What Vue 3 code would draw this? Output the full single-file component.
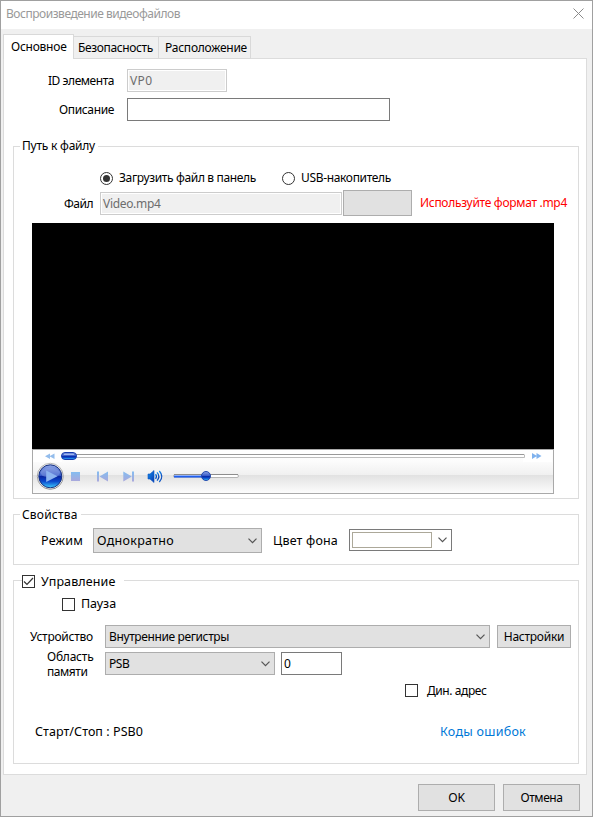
<script setup>
import { ref } from 'vue'

const tabs = [
  { title: 'Безопасность', size: 75, cls: 'tab-security' },
  { title: 'Расположение', size: 82, cls: 'tab-layout' },
]
const source = ref('panel')
const control = ref(true)
const pause = ref(false)
const dynamic = ref(false)

// Spreads or tightens the letters so that a caption takes the given width.
const vFit = {
  mounted(el, { value }) {
    const natural = el.getBoundingClientRect().width
    const count = el.textContent.length
    el.style.letterSpacing = `${(value - natural) / count}px`
  },
}
</script>

<template>
  <div class="dialog">
    <header class="titlebar">
      <span v-fit="174" class="t">Воспроизведение видеофайлов</span>
      <svg class="close" width="11" height="11" viewBox="0 0 11 11"><path d="M.5 .5l10 10M10.500 .5l-10 10" /></svg>
    </header>

    <nav class="tabs">
      <div class="tab active"><span v-fit="55.5" class="t">Основное</span></div>
      <div v-for="tab in tabs" :key="tab.title" class="tab" :class="tab.cls">
        <span v-fit="tab.size" class="t">{{ tab.title }}</span>
      </div>
    </nav>

    <main class="panel">
      <div class="row id-row">
        <label class="caption"><span v-fit="66" class="t">ID элемента</span></label>
        <div class="field disabled id-field"><span v-fit="22.500" class="t">VP0</span></div>
      </div>
      <div class="row desc-row">
        <label class="caption"><span v-fit="55" class="t">Описание</span></label>
        <div class="field desc-field"></div>
      </div>

      <section class="group path">
        <div class="legend"><span v-fit="73" class="t">Путь к файлу</span></div>
        <div class="row radios">
          <label class="option" @click="source = 'panel'">
            <i class="radio" :class="{ on: source === 'panel' }"></i>
            <span v-fit="137" class="t">Загрузить файл в панель</span>
          </label>
          <label class="option" @click="source = 'usb'">
            <i class="radio" :class="{ on: source === 'usb' }"></i>
            <span v-fit="90" class="t">USB-накопитель</span>
          </label>
        </div>
        <div class="row file-row">
          <label class="caption file-caption"><span v-fit="29" class="t">Файл</span></label>
          <div class="field disabled file-field"><span v-fit="57.500" class="t">Video.mp4</span></div>
          <button class="btn browse"></button>
          <span v-fit="147" class="t hint">Используйте формат .mp4</span>
        </div>
        <div class="player">
          <div class="screen"></div>
          <svg class="controls" width="522" height="45" viewBox="0 0 522 45">
            <defs>
              <linearGradient id="bar" x1="0" y1="0" x2="0" y2="1">
                <stop offset="0" stop-color="#fff" /><stop offset=".27" stop-color="#fcfcfc" />
                <stop offset=".58" stop-color="#f0f0f0" /><stop offset=".59" stop-color="#e2e2e2" />
                <stop offset="1" stop-color="#fdfdfd" />
              </linearGradient>
              <linearGradient id="orb" x1="0" y1="0" x2="0" y2="1">
                <stop offset="0" stop-color="#8fa6e6" /><stop offset=".46" stop-color="#3a5cc8" />
                <stop offset=".5" stop-color="#0a25a0" /><stop offset=".72" stop-color="#0a48cc" />
                <stop offset="1" stop-color="#3fd0ff" />
              </linearGradient>
              <linearGradient id="pale" x1="0" y1="0" x2="0" y2="1">
                <stop offset="0" stop-color="#84bdf0" /><stop offset="1" stop-color="#a9a8dc" />
              </linearGradient>
              <linearGradient id="vol" x1="0" y1="0" x2="1" y2="1">
                <stop offset="0" stop-color="#1590ee" /><stop offset="1" stop-color="#0838b0" />
              </linearGradient>
              <linearGradient id="ring" x1="0" y1="0" x2="0" y2="1">
                <stop offset="0" stop-color="#b8b8b8" /><stop offset="1" stop-color="#8d8d8d" />
              </linearGradient>
            </defs>
            <rect x=".5" y=".5" width="521" height="44" fill="url(#bar)" stroke="#a9a9a9" />
            <path d="M1 13V1.500H520V13H491V9H30V13Z" fill="#fff" />

            <path d="M18 4.500v5.500l-5-2.750zM22.500 4.500v5.500l-5-2.750z" fill="#94bdec" />
            <path d="M500 4v6l5-3zM504.500 4v6l5-3z" fill="#7fb2ee" />
            <path d="M31 8.500H492.500V5.500" fill="none" stroke="#bdbdbd" />
            <path d="M31 5.500H492" stroke="#999" />
            <rect x="29.500" y="3.500" width="15" height="7" rx="3.500" fill="url(#orb)" stroke="#173caf" />
            <path d="M32 5.500h10" stroke="#9fb7f0" />

            <circle cx="18.300" cy="27.300" r="13" fill="#f3f3f3" stroke="url(#ring)" />
            <circle cx="18.300" cy="27.300" r="11.500" fill="url(#orb)" stroke="#16307f" />
            <path d="M8.500 23Q18 14 28 23Q28 29 18 28Q9 29 8.500 23Z" fill="#9eb2ea" opacity=".35" />
            <path d="M14.200 21.500v11.500l11.300-5.700z" fill="#8db4f0" />

            <rect x="39" y="23" width="9" height="9" fill="url(#pale)" />
            <path d="M65 22.500h2v10h-2zM76 22.500v10l-8.500-5z" fill="url(#pale)" />
            <path d="M102 22.500h-2v10h2zM91.300 22.500v10l8.500-5z" fill="url(#pale)" />
            <path d="M116 25h2l4-3.500v12l-4-3.500h-2z" fill="url(#vol)" stroke="#0b56c4" stroke-width=".6" />
            <g fill="none" stroke="url(#vol)" stroke-width="1.300">
              <path d="M123.500 25.200q1.800 2.300 0 4.600" />
              <path d="M125 23.400q3.600 4.100 0 8.200" />
              <path d="M127.300 22q5 5.500 0 11" />
            </g>

            <rect x="141.500" y="25.500" width="65" height="3" rx="1.500" fill="#fff" stroke="#b5b5b5" />
            <path d="M142 25.500h64" stroke="#8d8d8d" />
            <path d="M142 27.500h32" stroke="#1f5ef0" stroke-width="2" />
            <circle cx="174" cy="27" r="4.500" fill="url(#orb)" stroke="#2449ad" />
          </svg>
        </div>
      </section>

      <section class="group props">
        <div class="legend"><span v-fit="55.500" class="t">Свойства</span></div>
        <div class="row props-row">
          <label class="caption mode-caption"><span v-fit="42" class="t wide">Режим</span></label>
          <div class="select mode">
            <span v-fit="77" class="t wide">Однократно</span>
            <svg class="chev" width="9" height="6" viewBox="0 0 9 6"><path d="M.5 .7l4 4 4-4" /></svg>
          </div>
          <label class="color-caption"><span v-fit="65" class="t wide">Цвет фона</span></label>
          <div class="color">
            <i class="swatch"></i>
            <svg class="chev" width="9" height="6" viewBox="0 0 9 6"><path d="M.5 .7l4 4 4-4" /></svg>
          </div>
        </div>
      </section>

      <section class="group control">
        <div class="legend check-legend" @click="control = !control">
          <i class="check"><svg v-if="control" width="11" height="11" viewBox="0 0 11 11"><path d="M1 5.500l3 3 6-6.500" /></svg></i>
          <span v-fit="74.500" class="t wide">Управление</span>
        </div>
        <label class="option pause" @click="pause = !pause">
          <i class="check"><svg v-if="pause" width="11" height="11" viewBox="0 0 11 11"><path d="M1 5.500l3 3 6-6.500" /></svg></i>
          <span v-fit="35" class="t wide">Пауза</span>
        </label>
        <div class="row device-row">
          <label class="caption dev-caption"><span v-fit="63" class="t">Устройство</span></label>
          <div class="select device">
            <span v-fit="120" class="t">Внутренние регистры</span>
            <svg class="chev" width="9" height="6" viewBox="0 0 9 6"><path d="M.5 .7l4 4 4-4" /></svg>
          </div>
          <button class="btn settings"><span v-fit="60.500" class="t">Настройки</span></button>
        </div>
        <div class="row memory-row">
          <label class="memory-caption">
            <span v-fit="46.500" class="t">Область</span>
            <span v-fit="40.500" class="t">памяти</span>
          </label>
          <div class="select memory">
            <span v-fit="20.500" class="t">PSB</span>
            <svg class="chev" width="9" height="6" viewBox="0 0 9 6"><path d="M.5 .7l4 4 4-4" /></svg>
          </div>
          <div class="field address"><span v-fit="7" class="t">0</span></div>
        </div>
        <label class="option dynamic" @click="dynamic = !dynamic">
          <i class="check"><svg v-if="dynamic" width="11" height="11" viewBox="0 0 11 11"><path d="M1 5.500l3 3 6-6.500" /></svg></i>
          <span v-fit="59.500" class="t">Дин. адрес</span>
        </label>
        <div class="row footer-row">
          <span v-fit="108" class="t wide">Старт/Стоп : PSB0</span>
          <a v-fit="86" class="t wide link">Коды ошибок</a>
        </div>
      </section>
    </main>

    <footer class="actions">
      <button class="btn action"><span v-fit="16.500" class="t">OK</span></button>
      <button class="btn action"><span v-fit="42" class="t">Отмена</span></button>
    </footer>
  </div>
</template>

<style>
body { margin: 0; background: #f0f0f0; }
</style>

<style scoped>
.dialog, .dialog * { box-sizing: border-box; }
.dialog {
  width: 593px; height: 817px; border: 1px solid #a0a0a0; background: #f0f0f0;
  font: 12px/16px "Noto Sans", "Open Sans", sans-serif; color: #000;
}
.t { display: inline-block; white-space: nowrap; flex: none; }
.wide { font-size: 12.500px; }
.titlebar {
  height: 28px; background: #fff; color: #999;
  display: flex; align-items: center; justify-content: space-between; padding: 0 8px 2px 5px;
}
.close { display: block; margin-bottom: 1px; }
.close path { stroke: #8a8a8a; fill: none; }

.tabs { display: flex; align-items: flex-end; height: 30px; margin: 0 0 -1px 2px; }
.tab {
  height: 23px; border: 1px solid #d9d9d9; border-left: 0; background: #f0f0f0;
  display: flex; align-items: center; padding-top: 1px;
}
.tab.active {
  width: 71px; height: 25px; border-left: 1px solid #d9d9d9; border-bottom: 0; background: #fff;
  padding: 0 0 1px 7px; position: relative; z-index: 1;
}
.tab-security { width: 85px; padding-left: 4px; }
.tab-layout { width: 92px; padding-left: 6px; }

.panel { width: 584px; height: 717px; margin-left: 2px; border: 1px solid #dcdcdc; background: #fff; padding: 10px 7px 0 9px; }
.row { display: flex; align-items: center; }
.caption { display: flex; justify-content: flex-end; flex: none; }
.id-row .caption, .desc-row .caption { width: 101px; margin-right: 13px; }
.desc-row { margin-top: 6px; }
.field { height: 23px; border: 1px solid #7a7a7a; background: #fff; display: flex; align-items: center; padding-left: 2px; flex: none; }
.field.disabled { border-color: #ccc; background: #f0f0f0; box-shadow: inset 0 0 0 1px #fff; color: #6d6d6d; }
.id-field { width: 100px; }
.desc-field { width: 263px; }

.group { width: 566px; border: 1px solid #dcdcdc; }
.legend { display: flex; width: fit-content; height: 16px; margin: -9px 0 0 6px; padding: 0 3px 0 2px; background: #fff; }
.path { height: 353px; margin-top: 25px; }
.radios { margin: 16px 0 0 86px; gap: 26px; height: 16px; }
.option { display: flex; align-items: center; gap: 6px; }
.radio { width: 13px; height: 13px; border: 1px solid #333; border-radius: 50%; display: grid; place-items: center; }
.radio.on::after { content: ""; width: 7px; height: 7px; border-radius: 50%; background: #333; }
.file-row { margin-top: 4px; height: 26px; }
.file-caption { width: 79px; margin-right: 7px; padding-top: 2px; }
.file-field { width: 242px; margin-top: 1px; }
.btn { border: 1px solid #adadad; background: #e1e1e1; font: inherit; color: inherit; padding: 0; display: flex; align-items: center; justify-content: center; flex: none; }
.browse { width: 69px; height: 26px; margin-left: 1px; }
.hint { color: #f00; margin: -1px 0 0 8px; }
.player { width: 522px; margin: 7px 0 0 18px; }
.screen { height: 226px; background: #000; }
.controls { display: block; }

.props { height: 51px; margin-top: 15px; }
.props .legend { height: 17px; padding-top: 1px; margin-bottom: -1px; }
.props-row { height: 25px; margin-top: 6px; }
.mode-caption { width: 69px; margin-right: 10px; }
.select { border: 1px solid #adadad; background: #e1e1e1; display: flex; align-items: center; justify-content: space-between; padding: 0 4px 0 3px; flex: none; }
.chev path { fill: none; stroke: #555; stroke-width: 1.200; }
.chev { display: block; }
.mode { width: 169px; height: 25px; }
.color-caption { width: 76px; padding-left: 11px; margin-right: 11px; }
.color { width: 103px; height: 22px; margin-top: -1px; border: 1px solid #7a7a7a; display: flex; align-items: center; justify-content: space-between; padding: 0 4px 0 2px; }
.swatch { width: 80px; height: 16px; border: 1px solid #aca899; }

.control { height: 184px; margin-top: 15px; }
.check-legend { margin: -7px 0 0 8px; padding: 0 8px 0 0; align-items: center; gap: 6px; }
.check { width: 13px; height: 13px; border: 1px solid #333; background: #fff; display: block; flex: none; }
.check svg { display: block; }
.check path { fill: none; stroke: #333; stroke-width: 1.200; }
.check-legend .check { margin-bottom: 1px; }
.pause { margin: 6px 0 0 48px; height: 16px; width: fit-content; }
.device-row { margin-top: 13px; height: 23px; }
.dev-caption { width: 79px; margin-right: 12px; }
.device { width: 385px; height: 23px; }
.settings { width: 74px; height: 23px; margin-left: 7px; }
.memory-row { margin-top: 4px; height: 23px; }
.memory-caption { display: flex; flex-direction: column; align-items: flex-start; width: 58px; margin: 0 0 0 33px; line-height: 15px; }
.memory { width: 170px; height: 23px; }
.address { width: 61px; margin-left: 6px; }
.dynamic { margin: 8px 0 0 391px; height: 16px; gap: 9px; width: fit-content; }
.dynamic .check { margin-bottom: 1px; }
.footer-row { margin: 25px 0 0 21px; width: 491px; justify-content: space-between; }
.link { color: #0078d7; }

.actions { display: flex; justify-content: flex-end; gap: 8px; padding: 9px 12px 0 0; }
.action { width: 77px; height: 27px; }
</style>
